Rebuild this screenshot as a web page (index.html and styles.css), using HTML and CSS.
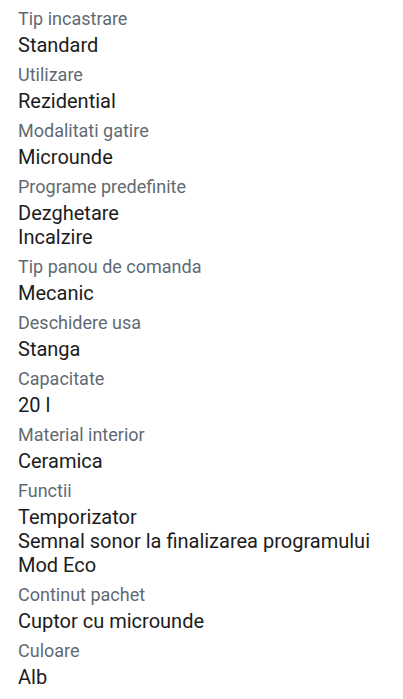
FILE: index.html
```html
<!DOCTYPE html>
<html lang="ro">
<head>
<meta charset="utf-8">
<title>Specificatii</title>
<link rel="stylesheet" href="styles.css">
</head>
<body>
<dl class="specs">
  <div class="item"><dt class="label">Tip incastrare</dt><dd class="value">Standard</dd></div>
  <div class="item"><dt class="label">Utilizare</dt><dd class="value">Rezidential</dd></div>
  <div class="item"><dt class="label">Modalitati gatire</dt><dd class="value">Microunde</dd></div>
  <div class="item"><dt class="label">Programe predefinite</dt><dd class="value">Dezghetare</dd><dd class="value">Incalzire</dd></div>
  <div class="item"><dt class="label">Tip panou de comanda</dt><dd class="value">Mecanic</dd></div>
  <div class="item"><dt class="label">Deschidere usa</dt><dd class="value">Stanga</dd></div>
  <div class="item"><dt class="label">Capacitate</dt><dd class="value">20 l</dd></div>
  <div class="item"><dt class="label">Material interior</dt><dd class="value">Ceramica</dd></div>
  <div class="item"><dt class="label">Functii</dt><dd class="value">Temporizator</dd><dd class="value">Semnal sonor la finalizarea programului</dd><dd class="value">Mod Eco</dd></div>
  <div class="item"><dt class="label">Continut pachet</dt><dd class="value">Cuptor cu microunde</dd></div>
  <div class="item"><dt class="label">Culoare</dt><dd class="value">Alb</dd></div>
</dl>
</body>
</html>
```
FILE: styles.css
```css
html, body {
  margin: 0;
  padding: 0;
  background: #ffffff;
}
body {
  font-family: Roboto, "Noto Sans", sans-serif;
}
.specs {
  margin: 0;
  padding: 1px 18px 0;
  display: flex;
  flex-direction: column;
}
.item {
  padding-top: 6px;
  display: flex;
  flex-direction: column;
}
.label {
  font-size: 18px;
  line-height: 24px;
  color: #5f6a74;
  margin: 0 0 2px 0;
}
.value {
  font-size: 20px;
  line-height: 24px;
  color: #1c1c1c;
  margin: 0;
}
```
